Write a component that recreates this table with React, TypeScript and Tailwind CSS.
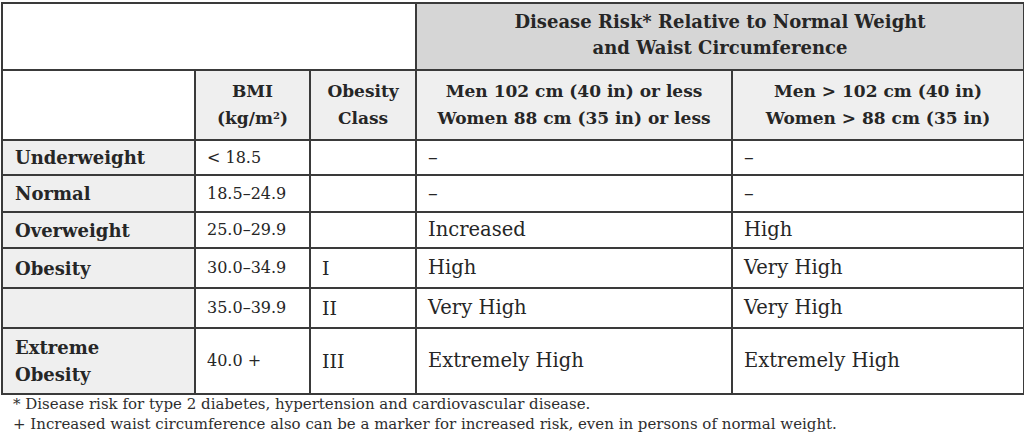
import React from 'react';

type Row = {
  label: string[];
  bmi: string;
  cls: string;
  low: string;
  high: string;
  h: string;
};

const rows: Row[] = [
  { label: ['Underweight'], bmi: '< 18.5', cls: '', low: '–', high: '–', h: 'h-[35px]' },
  { label: ['Normal'], bmi: '18.5–24.9', cls: '', low: '–', high: '–', h: 'h-[37px]' },
  { label: ['Overweight'], bmi: '25.0–29.9', cls: '', low: 'Increased', high: 'High', h: 'h-[36px]' },
  { label: ['Obesity'], bmi: '30.0–34.9', cls: 'I', low: 'High', high: 'Very High', h: 'h-[40px]' },
  { label: [], bmi: '35.0–39.9', cls: 'II', low: 'Very High', high: 'Very High', h: 'h-[40px]' },
  { label: ['Extreme', 'Obesity'], bmi: '40.0 +', cls: 'III', low: 'Extremely High', high: 'Extremely High', h: 'h-[66px]' },
];

const cell = 'border-2 border-[#3a3a3a] align-middle';

export default function App() {
  return (
    <div className="w-[1024px] h-[438px] bg-white text-[#262626] overflow-hidden" style={{ fontFamily: '"DejaVu Serif", serif' }}>
      <table className="ml-[1px] mt-[2px] w-[1022px] table-fixed border-collapse">
        <colgroup>
          <col className="w-[193px]" />
          <col className="w-[115px]" />
          <col className="w-[106px]" />
          <col className="w-[316px]" />
          <col className="w-[292px]" />
        </colgroup>
        <thead>
          <tr className="h-[67px]">
            <th colSpan={3} className={`${cell} bg-white`}></th>
            <th colSpan={2} className={`${cell} bg-[#d6d6d6] pb-[3px] text-[18px] font-bold leading-[26px] text-center`}>
              Disease Risk* Relative to Normal Weight
              <br />
              and Waist Circumference
            </th>
          </tr>
          <tr className="h-[70px]">
            <th className={`${cell} bg-white`}></th>
            <th className={`${cell} bg-[#efefef] text-[17px] font-bold leading-[27px] text-center`}>
              BMI
              <br />
              (kg/m<sup className="text-[10px]">2</sup>)
            </th>
            <th className={`${cell} bg-[#efefef] text-[17px] font-bold leading-[27px] text-center`}>
              Obesity
              <br />
              Class
            </th>
            <th className={`${cell} bg-[#efefef] text-[17px] font-bold leading-[27px] text-center`}>
              Men 102 cm (40 in) or less
              <br />
              Women 88 cm (35 in) or less
            </th>
            <th className={`${cell} bg-[#efefef] text-[17px] font-bold leading-[27px] text-center`}>
              Men &gt; 102 cm (40 in)
              <br />
              Women &gt; 88 cm (35 in)
            </th>
          </tr>
        </thead>
        <tbody>
          {rows.map((r, i) => (
            <tr key={i} className={r.h}>
              <td className={`${cell} bg-[#efefef] pl-[12px] text-[18px] font-bold leading-[27px]`}>
                {r.label.map((l, j) => (
                  <div key={j}>{l}</div>
                ))}
              </td>
              <td className={`${cell} pl-[11px] text-[16px]`}>{r.bmi}</td>
              <td className={`${cell} pl-[11px] text-[19px]`}>{r.cls}</td>
              <td className={`${cell} pl-[11px] text-[19.5px]`}>{r.low}</td>
              <td className={`${cell} pl-[11px] text-[19.5px]`}>{r.high}</td>
            </tr>
          ))}
        </tbody>
      </table>
      <div className="-mt-[1px] pl-[13px] text-[15px] leading-[20px] text-[#2e2e2e]">
        <p>* Disease risk for type 2 diabetes, hypertension and cardiovascular disease.</p>
        <p>+ Increased waist circumference also can be a marker for increased risk, even in persons of normal weight.</p>
      </div>
    </div>
  );
}
